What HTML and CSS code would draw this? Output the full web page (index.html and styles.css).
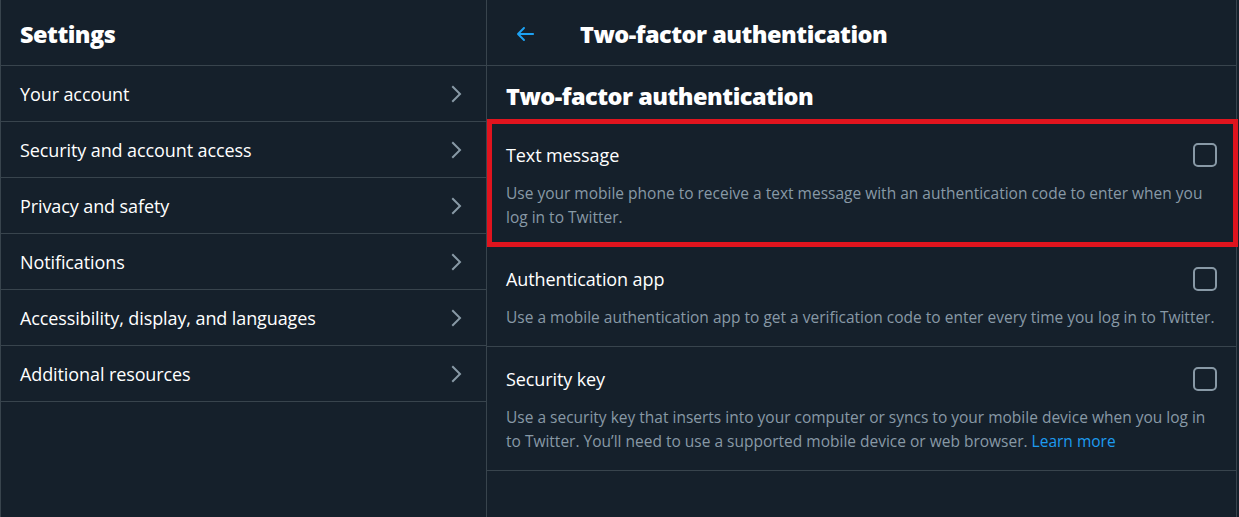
FILE: index.html
```html
<!DOCTYPE html>
<html lang="en">
<head>
<meta charset="utf-8">
<title>Two-factor authentication</title>
<link rel="stylesheet" href="styles.css">
</head>
<body>
<div class="app">
  <aside class="settings">
    <header class="col-header">
      <h1 class="h-title">Settings</h1>
    </header>
    <nav class="menu">
      <a class="menu-row" href="#"><span>Your account</span><svg class="chev" viewBox="0 0 24 24"><path d="M14.586 12L7.543 4.96l1.414-1.42L17.414 12l-8.457 8.46-1.414-1.42L14.586 12z"/></svg></a>
      <a class="menu-row" href="#"><span>Security and account access</span><svg class="chev" viewBox="0 0 24 24"><path d="M14.586 12L7.543 4.96l1.414-1.42L17.414 12l-8.457 8.46-1.414-1.42L14.586 12z"/></svg></a>
      <a class="menu-row" href="#"><span>Privacy and safety</span><svg class="chev" viewBox="0 0 24 24"><path d="M14.586 12L7.543 4.96l1.414-1.42L17.414 12l-8.457 8.46-1.414-1.42L14.586 12z"/></svg></a>
      <a class="menu-row" href="#"><span>Notifications</span><svg class="chev" viewBox="0 0 24 24"><path d="M14.586 12L7.543 4.96l1.414-1.42L17.414 12l-8.457 8.46-1.414-1.42L14.586 12z"/></svg></a>
      <a class="menu-row" href="#"><span>Accessibility, display, and languages</span><svg class="chev" viewBox="0 0 24 24"><path d="M14.586 12L7.543 4.96l1.414-1.42L17.414 12l-8.457 8.46-1.414-1.42L14.586 12z"/></svg></a>
      <a class="menu-row" href="#"><span>Additional resources</span><svg class="chev" viewBox="0 0 24 24"><path d="M14.586 12L7.543 4.96l1.414-1.42L17.414 12l-8.457 8.46-1.414-1.42L14.586 12z"/></svg></a>
    </nav>
  </aside>
  <main class="detail">
    <header class="col-header detail-header">
      <a class="back" href="#"><svg viewBox="0 0 24 24"><path d="M20 11H7.414l4.293-4.293c.39-.39.39-1.023 0-1.414s-1.023-.39-1.414 0l-6 6c-.39.39-.39 1.023 0 1.414l6 6c.195.195.45.293.707.293s.512-.098.707-.293c.39-.39.39-1.023 0-1.414L7.414 13H20c.553 0 1-.447 1-1s-.447-1-1-1z"/></svg></a>
      <h2 class="h-title">Two-factor authentication</h2>
    </header>
    <div class="section-title">Two-factor authentication</div>
    <div class="option highlighted">
      <div class="option-head"><span class="option-label">Text message</span><span class="checkbox"></span></div>
      <p class="option-desc">Use your mobile phone to receive a text message with an authentication code to enter when you log in to Twitter.</p>
    </div>
    <div class="option">
      <div class="option-head"><span class="option-label">Authentication app</span><span class="checkbox"></span></div>
      <p class="option-desc">Use a mobile authentication app to get a verification code to enter every time you log in to Twitter.</p>
    </div>
    <div class="option">
      <div class="option-head"><span class="option-label">Security key</span><span class="checkbox"></span></div>
      <p class="option-desc">Use a security key that inserts into your computer or syncs to your mobile device when you log in to Twitter. You’ll need to use a supported mobile device or web browser. <a class="link" href="#">Learn more</a></p>
    </div>
  </main>
</div>
</body>
</html>
```
FILE: styles.css
```css
* { box-sizing: border-box; }
html, body { margin: 0; padding: 0; }
body {
  background: #15202b;
  color: #ffffff;
  font-family: "Open Sans", "Noto Sans", sans-serif;
  width: 1239px;
  height: 517px;
  overflow: hidden;
}
.app {
  display: flex;
  height: 517px;
}
.settings {
  width: 487px;
  flex: none;
  border-left: 1px solid #38444d;
  border-right: 1px solid #38444d;
}
.detail {
  width: 750px;
  flex: none;
  border-right: 1px solid #38444d;
}
.col-header {
  height: 66px;
  display: flex;
  align-items: center;
  padding: 2px 19px 0;
  border-bottom: 1px solid #38444d;
}
.h-title {
  margin: 0;
  font-size: 23.5px;
  font-weight: 800;
  letter-spacing: -0.5px;
  line-height: 30px;
}
.menu { display: flex; flex-direction: column; }
.menu-row {
  height: 56px;
  display: flex;
  align-items: center;
  justify-content: space-between;
  padding: 0 18px 0 19px;
  border-bottom: 1px solid #38444d;
  color: #ffffff;
  text-decoration: none;
  font-size: 18px;
  letter-spacing: -0.1px;
}
.chev { width: 24px; height: 24px; fill: #8899a6; }
.detail-header { padding-left: 26px; gap: 43px; }
.back { display: flex; width: 24px; height: 24px; }
.back svg { width: 24px; height: 24px; fill: #1da1f2; }
.section-title {
  height: 57px;
  display: flex;
  align-items: center;
  padding: 3px 19px 0;
  font-size: 23.5px;
  font-weight: 800;
  letter-spacing: -0.5px;
}
.option {
  padding: 20px 19px 17px;
  border-bottom: 1px solid #38444d;
}
.option.highlighted {
  position: relative;
  border-bottom-color: transparent;
}
.option.highlighted::after {
  content: "";
  position: absolute;
  top: -4px;
  left: 0;
  right: -2px;
  bottom: -1px;
  border: 5px solid #e0141e;
  pointer-events: none;
}
.option-head {
  display: flex;
  align-items: center;
  justify-content: space-between;
  height: 24px;
}
.option-label { font-size: 18px; letter-spacing: -0.1px; }
.checkbox {
  width: 24px;
  height: 24px;
  border: 2px solid #8899a6;
  border-radius: 5px;
}
.option-desc {
  margin: 14px 0 0;
  font-size: 15.5px;
  line-height: 24px;
  color: #8899a6;
  letter-spacing: 0;
}
.link { color: #1d9bf0; text-decoration: none; }
```
